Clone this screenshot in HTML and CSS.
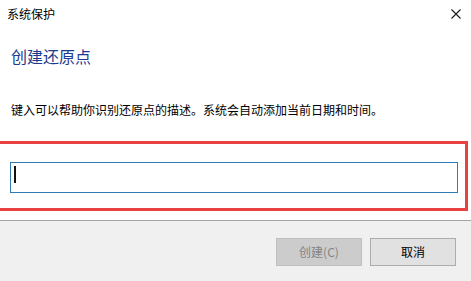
FILE: index.html
```html
<!DOCTYPE html>
<html lang="zh-CN">
<head>
<meta charset="utf-8">
<title>系统保护</title>
<link rel="stylesheet" href="styles.css">
</head>
<body>
<div class="window">
  <div class="titlebar">
    <span class="title">系统保护</span>
    <span class="close" aria-label="关闭">
      <svg width="10" height="10" viewBox="0 0 10 10"><path d="M0.5 0.5 L9.5 9.5 M9.5 0.5 L0.5 9.5" stroke="#1a1a1a" stroke-width="1.1" fill="none"/></svg>
    </span>
  </div>
  <div class="content">
    <h1 class="heading">创建还原点</h1>
    <p class="desc">键入可以帮助你识别还原点的描述。系统会自动添加当前日期和时间。</p>
  </div>
  <div class="highlight">
    <div class="field"><span class="caret"></span></div>
  </div>
  <div class="footer">
    <button class="btn btn-disabled" disabled>创建(C)</button>
    <button class="btn">取消</button>
  </div>
</div>
</body>
</html>
```

FILE: styles.css
```css
html, body {
  margin: 0;
  padding: 0;
  background: #ffffff;
}
body {
  width: 471px;
  height: 281px;
  overflow: hidden;
  font-family: "Noto Sans CJK SC", "Noto Sans", sans-serif;
  color: #000;
}
.window {
  width: 471px;
  height: 281px;
  display: flex;
  flex-direction: column;
  background: #fff;
}
.titlebar {
  height: 28px;
  display: flex;
  align-items: center;
  justify-content: space-between;
  padding-left: 7px;
  padding-right: 10px;
}
.title {
  font-size: 12px;
  line-height: 28px;
  color: #000;
}
.close {
  display: flex;
  width: 10px;
  height: 10px;
  margin-top: -1px;
}
.content {
  padding-left: 11px;
}
.heading {
  margin: 18px 0 0 0;
  font-size: 16px;
  line-height: 20px;
  font-weight: normal;
  color: #1c3a8e;
}
.desc {
  margin: 36px 0 0 0;
  font-size: 12px;
  line-height: 16px;
  color: #000;
}
.highlight {
  margin-top: 23px;
  margin-right: 3px;
  border: 3px solid #e8413f;
  border-left: none;
  padding: 18px 7px 15px 10px;
}
.field {
  height: 31px;
  box-sizing: border-box;
  border: 1px solid #2e7bb6;
  background: #fff;
  padding: 3px 0 0 3px;
}
.caret {
  display: block;
  width: 2px;
  height: 17px;
  background: #111;
}
.footer {
  margin-top: 9px;
  border-top: 1px solid #a3a3a3;
  background: #f0f0f0;
  flex: 1;
  display: flex;
  justify-content: flex-end;
  align-items: flex-start;
  gap: 8px;
  padding: 17px 15px 0 0;
}
.btn {
  width: 86px;
  height: 28px;
  box-sizing: border-box;
  border: 1px solid #adadad;
  background: #e1e1e1;
  font-family: "Noto Sans CJK SC", "Noto Sans", sans-serif;
  font-size: 12px;
  line-height: 16px;
  color: #000;
  padding: 0;
  margin: 0;
}
.btn-disabled {
  background: #cccccc;
  border-color: #bfbfbf;
  color: #838383;
}
```
